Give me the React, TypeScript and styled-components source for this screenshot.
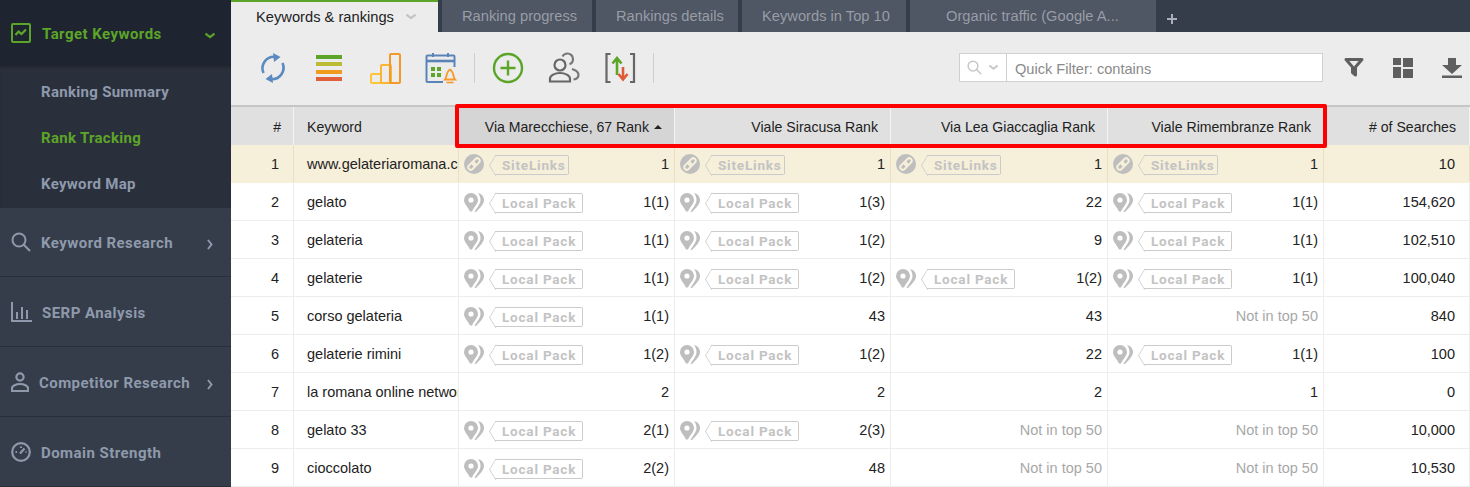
import styled, {createGlobalStyle} from "styled-components";
import {ReactNode} from "react";

const GlobalStyle = createGlobalStyle`
  html, body {
    margin: 0;
    height: 100%;
    overflow: hidden;
    background: #fff;
  }
  * {
    box-sizing: border-box;
  }
`

const green = "#5ca528";
const sideGrey = "#8e9aac";
const badgeGrey = "#c3c3c3";

const Page = styled.div`
  display: flex;
  width: 1470px;
  height: 487px;
  overflow: hidden;
  font-family: "Liberation Sans", Arial, sans-serif;
  font-size: 14.5px;
  color: #222;
`

/* sidebar */
const Sidebar = styled.nav`
  flex: 0 0 231px;
  display: flex;
  flex-direction: column;
  background: #363d4a;
  font-family: Roboto, "Liberation Sans", sans-serif;
  font-size: 15px;
  font-weight: 700;
  letter-spacing: 0.45px;
  color: ${sideGrey};
`

const ActiveItem = styled.div`
  height: 66px;
  display: flex;
  align-items: center;
  gap: 11px;
  padding: 0 15px 0 11px;
  background: #1f2431;
  color: ${green};
`

const ItemLabel = styled.span`
  padding-top: 2px;
`

const SubMenu = styled.div`
  height: 142px;
  padding-top: 3px;
  background: #2a2f3c;
  box-shadow: inset 0 2px 2px rgba(0, 0, 0, 0.15);
  letter-spacing: 0.3px;
`

const SubItem = styled.div<{ $active?: boolean }>`
  height: 46px;
  display: flex;
  align-items: center;
  padding-left: 41px;
  color: ${p => p.$active ? green : sideGrey};
`

const SideItem = styled.div`
  height: 70px;
  display: flex;
  align-items: center;
  gap: 10px;
  padding: 0 18px 0 11px;
  border-bottom: 1px solid #2a2f3c;
`

const Arrow = styled.span`
  margin-left: auto;
  padding-top: 5px;
  display: flex;
`

/* main */
const Main = styled.main`
  position: relative;
  flex: 1;
  display: flex;
  flex-direction: column;
  min-width: 0;
`

const TabBar = styled.div`
  height: 32px;
  display: flex;
  gap: 4px;
  background: #363d4a;
  font-size: 14.7px;
`

const Tab = styled.div<{ $width: number; $pad: number }>`
  width: ${p => p.$width}px;
  padding-left: ${p => p.$pad}px;
  display: flex;
  align-items: center;
  background: #4f5664;
  color: #989da6;
  white-space: nowrap;
`

const ActiveTab = styled(Tab)`
  gap: 11px;
  background: #ececec;
  border-top: 2px solid ${green};
  color: #222;
`

const AddTab = styled.div`
  margin-left: 7px;
  padding-top: 6px;
  display: flex;
  align-items: center;
  color: #aab0ba;
`

const Toolbar = styled.div`
  height: 73px;
  display: flex;
  align-items: center;
  padding: 0 6px 1px 26px;
  background: #ececec;
`

const ToolGroup = styled.div`
  display: flex;
  align-items: center;
  gap: 24px;
`

const ToolDivider = styled.span`
  width: 1px;
  height: 30px;
  margin: 0 17px;
  background: #cfcfcf;
`

const FilterBox = styled.div`
  margin: 0 0 1px auto;
  width: 364px;
  height: 29px;
  display: flex;
  border: 1px solid #d0d0d0;
  background: #fff;
`

const FilterIcons = styled.div`
  width: 47px;
  display: flex;
  align-items: center;
  justify-content: center;
  gap: 6px;
  border-right: 1px solid #d0d0d0;
`

const FilterText = styled.div`
  padding: 2px 0 0 8px;
  display: flex;
  align-items: center;
  font-size: 14.6px;
  color: #8a8a8a;
`

const ActionGroup = styled.div`
  margin-left: 19px;
  display: flex;
  gap: 25px;
`

const Table = styled.div`
  border-top: 2px solid #c6c6c6;
`

const columns = "63px 165px 216px 216px 217px 216px 146px";

const HeaderRow = styled.div`
  display: grid;
  grid-template-columns: ${columns};
  height: 38px;
  background: #e0e0e0;
  font-size: 14.1px;
`

const HeaderCell = styled.div<{ $left?: boolean; $sorted?: boolean }>`
  display: flex;
  align-items: center;
  justify-content: ${p => p.$left ? "flex-start" : "flex-end"};
  gap: 5px;
  padding: ${p => p.$left ? "2px 0 0 13px" : "2px 12px 0 0"};
  background: ${p => p.$sorted ? "#d5d5d5" : "transparent"};
  border-right: 1px solid #f4f4f4;
  white-space: nowrap;
`

const SearchHeader = styled(HeaderCell)`
  padding-right: 13px;
`

const Row = styled.div<{ $highlight?: boolean }>`
  display: grid;
  grid-template-columns: ${columns};
  height: 38px;
  background: ${p => p.$highlight ? "#f6efd9" : "#fff"};
  border-bottom: 1px solid ${p => p.$highlight ? "#f6efd9" : "#ededed"};
`

const Cell = styled.div<{ $highlight?: boolean }>`
  display: flex;
  align-items: center;
  min-width: 0;
  padding: 0 5px;
  overflow: hidden;
  white-space: nowrap;
  border-right: 1px solid ${p => p.$highlight ? "#eadfc3" : "#ededed"};
`

const IndexCell = styled(Cell)`
  justify-content: flex-end;
  padding-right: 14px;
`

const KeywordCell = styled(Cell)`
  padding: 0 0 0 13px;
`

const SearchCell = styled(Cell)`
  justify-content: flex-end;
  padding-right: 14px;
`

const Value = styled.span<{ $muted?: boolean }>`
  margin-left: auto;
  color: ${p => p.$muted ? "#a8a8a8" : "#222"};
`

const Badge = styled.span<{ $width: number }>`
  position: relative;
  width: ${p => p.$width}px;
  height: 20px;
  margin: 2px 0 0 11px;
  padding-left: 7px;
  display: flex;
  align-items: center;
  border: 1px solid #cbcbcb;
  border-left: none;
  border-radius: 0 2px 2px 0;
  font-family: Roboto, "Liberation Sans", sans-serif;
  font-size: 13.5px;
  font-weight: 700;
  letter-spacing: 0.8px;
  color: ${badgeGrey};

  &::before {
    content: "";
    position: absolute;
    left: -7px;
    top: 2px;
    width: 14px;
    height: 14px;
    border-left: 1px solid #cbcbcb;
    border-bottom: 1px solid #cbcbcb;
    transform: scaleX(0.6) rotate(45deg);
  }
`

const RedFrame = styled.div`
  position: absolute;
  left: 224px;
  top: 104px;
  width: 872px;
  height: 44px;
  border: 4px solid #f00;
  border-radius: 2px;
  pointer-events: none;
`

/* icons */
const Chevron = ({color, size = 12}: { color: string; size?: number }) => (
    <svg width={size} height={size * 0.6} viewBox="0 0 12 7" fill="none">
        <path d="M1.5 1.5 6 5l4.500-3.500" stroke={color} strokeWidth="2.200"/>
    </svg>
)

const ChevronRight = () => (
    <svg width="6" height="11" viewBox="0 0 6 11" fill="none">
        <path d="M1 1l3.500 4.500L1 10" stroke={sideGrey} strokeWidth="2"/>
    </svg>
)

const TrendIcon = () => (
    <svg width="20" height="20" viewBox="0 0 20 20" fill="none" stroke={green} strokeWidth="2">
        <rect x="1" y="1" width="18" height="18" rx="1"/>
        <path d="M4.500 12l3-3.500 3 2.500 4.500-4.500" strokeWidth="2.300"/>
    </svg>
)

const SearchIcon = ({color = sideGrey, size = 20, width = 2}: { color?: string; size?: number; width?: number }) => (
    <svg width={size} height={size} viewBox="0 0 20 20" fill="none" stroke={color} strokeWidth={width}>
        <circle cx="8" cy="8" r="6.500"/>
        <path d="M12.500 12.500 19 19"/>
    </svg>
)

const BarsIcon = () => (
    <svg width="21" height="20" viewBox="0 0 21 20" fill="none" stroke={sideGrey}>
        <path d="M1 0v19h20" strokeWidth="2"/>
        <path d="M6 10v7M11 5v12M16 8v9" strokeWidth="2"/>
    </svg>
)

const PersonIcon = () => (
    <svg width="18" height="20" viewBox="0 0 18 20" fill="none" stroke={sideGrey} strokeWidth="2.200">
        <circle cx="9" cy="5" r="3.600"/>
        <path d="M1 19v-3c0-2 4-4 8-4s8 2 8 4v3z"/>
    </svg>
)

const GaugeIcon = () => (
    <svg width="20" height="20" viewBox="0 0 20 20" fill="none" stroke={sideGrey} strokeWidth="2.200">
        <circle cx="10" cy="10" r="8.800"/>
        <path d="M9 11.500 13.500 6.500M4.500 10h1.500M10 4.500v1.500M14.500 10h1"/>
    </svg>
)

const RefreshIcon = () => (
    <svg width="32" height="32" viewBox="0 0 32 32" fill="none">
        <path d="M6.500 21A11.500 11.500 0 0 1 17 4.800M25.500 11A11.500 11.500 0 0 1 15 27.200" stroke="#5a8ac0" strokeWidth="2.600"/>
        <path d="M16 1l7.500 4-6.500 5zM16 31l-7.500-4 6.500-5z" fill="#5a8ac0"/>
    </svg>
)

const LinesIcon = () => (
    <svg width="32" height="32" viewBox="0 0 32 32">
        <rect x="3" y="3" width="26" height="4" fill="#5ca528"/>
        <rect x="3" y="10" width="26" height="4" fill="#bcbb35"/>
        <rect x="3" y="18" width="26" height="4" fill="#f09a1e"/>
        <rect x="3" y="25" width="26" height="4" fill="#e0603a"/>
    </svg>
)

const StepsIcon = () => (
    <svg width="32" height="32" viewBox="0 0 32 32" fill="none" strokeWidth="2">
        <rect x="2" y="22" width="10" height="9" rx="1" stroke="#fcc437"/>
        <rect x="12" y="13" width="10" height="18" rx="1" stroke="#fbb52f"/>
        <rect x="21" y="2" width="10" height="29" rx="1" stroke="#f3982a"/>
    </svg>
)

const CalendarIcon = () => (
    <svg width="32" height="32" viewBox="0 0 32 32" fill="none">
        <path d="M18 30H2.500a1 1 0 0 1-1-1V4.500a1 1 0 0 1 1-1h26a1 1 0 0 1 1 1V15" stroke="#5a84b8" strokeWidth="2"/>
        <path d="M2 9h27" stroke="#5a84b8" strokeWidth="2.600"/>
        <path d="M8 1v4M23 1v4" stroke="#5a84b8" strokeWidth="2"/>
        <path d="M6 15h4v4H6zM12 15h4v4h-4zM6 21h4v4H6zM12 21h4v4h-4z" fill="#5ca528"/>
        <path d="M20 27.500c2-2 1-8 5-10 4 2 3 8 5 10z" stroke="#f79a2a" strokeWidth="1.800"/>
        <path d="M21.500 30.500h7" stroke="#f79a2a" strokeWidth="1.600"/>
    </svg>
)

const PlusIcon = () => (
    <svg width="32" height="32" viewBox="0 0 32 32" fill="none" stroke={green}>
        <circle cx="16" cy="16" r="14" strokeWidth="2.400"/>
        <path d="M16 8.500v15M8.500 16h15" strokeWidth="2.400"/>
    </svg>
)

const UsersIcon = () => (
    <svg width="32" height="32" viewBox="0 0 32 32" fill="none" stroke="#666" strokeWidth="2.200">
        <circle cx="12" cy="13" r="5.500"/>
        <path d="M2 29.500v-3c0-3 5-5.500 10-5.500s10 2.500 10 5.500v3z"/>
        <path d="M14.500 4.500c1-2 3-3 5-3 3 0 5.500 2.500 5.500 5.500 0 2.500-1.500 4.500-3.500 5.300M24 17c3.500 1 6.500 3 6.500 6 0 2-1.500 4-5 4.500" stroke="#777"/>
    </svg>
)

const SwapIcon = () => (
    <svg width="32" height="32" viewBox="0 0 32 32" fill="none">
        <path d="M6.500 2H2.500v28h4M26 2h4v28h-4" stroke="#666" strokeWidth="2.200"/>
        <path d="M13 23V6M8.500 11.500 13 6l4.500 5.500" stroke={green} strokeWidth="2.600"/>
        <path d="M19 15v12M14.500 22 19 27.500l4.500-5.500" stroke="#de5a3a" strokeWidth="2.600"/>
    </svg>
)

const FunnelIcon = () => (
    <svg width="24" height="22" viewBox="0 0 24 22" fill="none" stroke="#5f5f5f" strokeWidth="3">
        <path d="M4 2.500h16l-6.500 7.500v8l-3-2.500V10z" strokeLinejoin="round"/>
    </svg>
)

const GridIcon = () => (
    <svg width="24" height="22" viewBox="0 0 24 22" fill="#5f5f5f">
        <rect x="2" y="1" width="8" height="7"/>
        <rect x="12" y="1" width="10" height="9"/>
        <rect x="2" y="10" width="8" height="11"/>
        <rect x="12" y="12" width="10" height="9"/>
    </svg>
)

const DownloadIcon = () => (
    <svg width="24" height="22" viewBox="0 0 24 22" fill="#5f5f5f">
        <path d="M8 1h8v7h6L12 17 2 8h6z"/>
        <rect x="2" y="18.500" width="20" height="2.500"/>
    </svg>
)

const SortArrow = () => (
    <svg width="8" height="4" viewBox="0 0 8 4" fill="#222">
        <path d="M4 0l4 4H0z"/>
    </svg>
)

const LinkIcon = () => (
    <svg width="20" height="20" viewBox="0 0 20 20" fill="none">
        <circle cx="10" cy="10" r="10" fill="#bebebe"/>
        <g stroke="#f6efd9" strokeWidth="2" transform="rotate(-45 10 10)">
            <rect x="3" y="7.500" width="8" height="5" rx="2.500"/>
            <rect x="9" y="7.500" width="8" height="5" rx="2.500"/>
        </g>
    </svg>
)

const PinIcon = () => (
    <svg width="20" height="20" viewBox="0 0 20 20" fill="#bebebe">
        <path fillRule="evenodd"
              d="M7 1a7 7 0 0 1 7 7c0 4-4 7-6 11.500H6C4 15 0 12 0 8a7 7 0 0 1 7-7zm0 4.400a2.600 2.600 0 1 0 0 5.200 2.600 2.600 0 0 0 0-5.200z"/>
        <path d="M14 1c4 1 6 4 6 7 0 4-4 8-8 12h-1.500c2.500-4.500 6-8 6-12 0-3-1-5-2.500-7z"/>
    </svg>
)

type Kind = "site" | "local" | "none";

interface Rank {
    kind: Kind;
    value: string;
}

const L = (value: string): Rank => ({kind: "local", value});
const S = (value: string): Rank => ({kind: "site", value});
const N = (value: string): Rank => ({kind: "none", value});
const OUT = "Not in top 50";

const rows: { keyword: string; ranks: Rank[]; searches: string }[] = [
    {keyword: "www.gelateriaromana.com", ranks: [S("1"), S("1"), S("1"), S("1")], searches: "10"},
    {keyword: "gelato", ranks: [L("1(1)"), L("1(3)"), N("22"), L("1(1)")], searches: "154,620"},
    {keyword: "gelateria", ranks: [L("1(1)"), L("1(2)"), N("9"), L("1(1)")], searches: "102,510"},
    {keyword: "gelaterie", ranks: [L("1(1)"), L("1(2)"), L("1(2)"), L("1(1)")], searches: "100,040"},
    {keyword: "corso gelateria", ranks: [L("1(1)"), N("43"), N("43"), N(OUT)], searches: "840"},
    {keyword: "gelaterie rimini", ranks: [L("1(2)"), L("1(2)"), N("22"), L("1(1)")], searches: "100"},
    {keyword: "la romana online network", ranks: [N("2"), N("2"), N("2"), N("1")], searches: "0"},
    {keyword: "gelato 33", ranks: [L("2(1)"), L("2(3)"), N(OUT), N(OUT)], searches: "10,000"},
    {keyword: "cioccolato", ranks: [L("2(2)"), N("48"), N(OUT), N(OUT)], searches: "10,530"},
];

const sideItems: { label: string; icon: ReactNode; arrow?: boolean }[] = [
    {label: "Keyword Research", icon: <SearchIcon/>, arrow: true},
    {label: "SERP Analysis", icon: <BarsIcon/>},
    {label: "Competitor Research", icon: <PersonIcon/>, arrow: true},
    {label: "Domain Strength", icon: <GaugeIcon/>},
];

const tabs = [
    {label: "Ranking progress", width: 150, pad: 20},
    {label: "Rankings details", width: 142, pad: 20},
    {label: "Keywords in Top 10", width: 164, pad: 20},
    {label: "Organic traffic (Google A...", width: 246, pad: 36},
];

const rankHeaders = ["Viale Siracusa Rank", "Via Lea Giaccaglia Rank", "Viale Rimembranze Rank"];

function RankCell({rank, highlight}: { rank: Rank; highlight: boolean }) {
    return (
        <Cell $highlight={highlight}>
            {rank.kind === "site" && <><LinkIcon/><Badge $width={74}>SiteLinks</Badge></>}
            {rank.kind === "local" && <><PinIcon/><Badge $width={88}>Local Pack</Badge></>}
            <Value $muted={rank.value === OUT}>{rank.value}</Value>
        </Cell>
    )
}

export default function App() {
    return (
        <Page>
            <GlobalStyle/>
            <Sidebar>
                <ActiveItem>
                    <TrendIcon/>
                    <ItemLabel>Target Keywords</ItemLabel>
                    <Arrow><Chevron color={green}/></Arrow>
                </ActiveItem>
                <SubMenu>
                    <SubItem>Ranking Summary</SubItem>
                    <SubItem $active>Rank Tracking</SubItem>
                    <SubItem>Keyword Map</SubItem>
                </SubMenu>
                {sideItems.map(item => (
                    <SideItem key={item.label}>
                        {item.icon}
                        <ItemLabel>{item.label}</ItemLabel>
                        {item.arrow && <Arrow><ChevronRight/></Arrow>}
                    </SideItem>
                ))}
            </Sidebar>
            <Main>
                <TabBar>
                    <ActiveTab $width={207} $pad={25}>
                        Keywords &amp; rankings
                        <Chevron color="#c4c4c4"/>
                    </ActiveTab>
                    {tabs.map(tab => (
                        <Tab key={tab.label} $width={tab.width} $pad={tab.pad}>{tab.label}</Tab>
                    ))}
                    <AddTab>
                        <svg width="10" height="10" viewBox="0 0 10 10" fill="none" stroke="currentColor" strokeWidth="2">
                            <path d="M5 0v10M0 5h10"/>
                        </svg>
                    </AddTab>
                </TabBar>
                <Toolbar>
                    <ToolGroup>
                        <RefreshIcon/>
                        <LinesIcon/>
                        <StepsIcon/>
                        <CalendarIcon/>
                    </ToolGroup>
                    <ToolDivider/>
                    <ToolGroup>
                        <PlusIcon/>
                        <UsersIcon/>
                        <SwapIcon/>
                    </ToolGroup>
                    <ToolDivider/>
                    <FilterBox>
                        <FilterIcons>
                            <SearchIcon color="#c8c8c8" size={15} width={2}/>
                            <Chevron color="#c8c8c8" size={11}/>
                        </FilterIcons>
                        <FilterText>Quick Filter: contains</FilterText>
                    </FilterBox>
                    <ActionGroup>
                        <FunnelIcon/>
                        <GridIcon/>
                        <DownloadIcon/>
                    </ActionGroup>
                </Toolbar>
                <Table>
                    <HeaderRow>
                        <HeaderCell>#</HeaderCell>
                        <HeaderCell $left>Keyword</HeaderCell>
                        <HeaderCell $sorted>Via Marecchiese, 67 Rank <SortArrow/></HeaderCell>
                        {rankHeaders.map(label => <HeaderCell key={label}>{label}</HeaderCell>)}
                        <SearchHeader>{"# of Searches"}</SearchHeader>
                    </HeaderRow>
                    {rows.map((row, i) => {
                        const highlight = i === 0;
                        return (
                            <Row key={row.keyword} $highlight={highlight}>
                                <IndexCell $highlight={highlight}>{i + 1}</IndexCell>
                                <KeywordCell $highlight={highlight}>{row.keyword}</KeywordCell>
                                {row.ranks.map((rank, j) => <RankCell key={j} rank={rank} highlight={highlight}/>)}
                                <SearchCell $highlight={highlight}>{row.searches}</SearchCell>
                            </Row>
                        )
                    })}
                </Table>
                <RedFrame/>
            </Main>
        </Page>
    )
}
